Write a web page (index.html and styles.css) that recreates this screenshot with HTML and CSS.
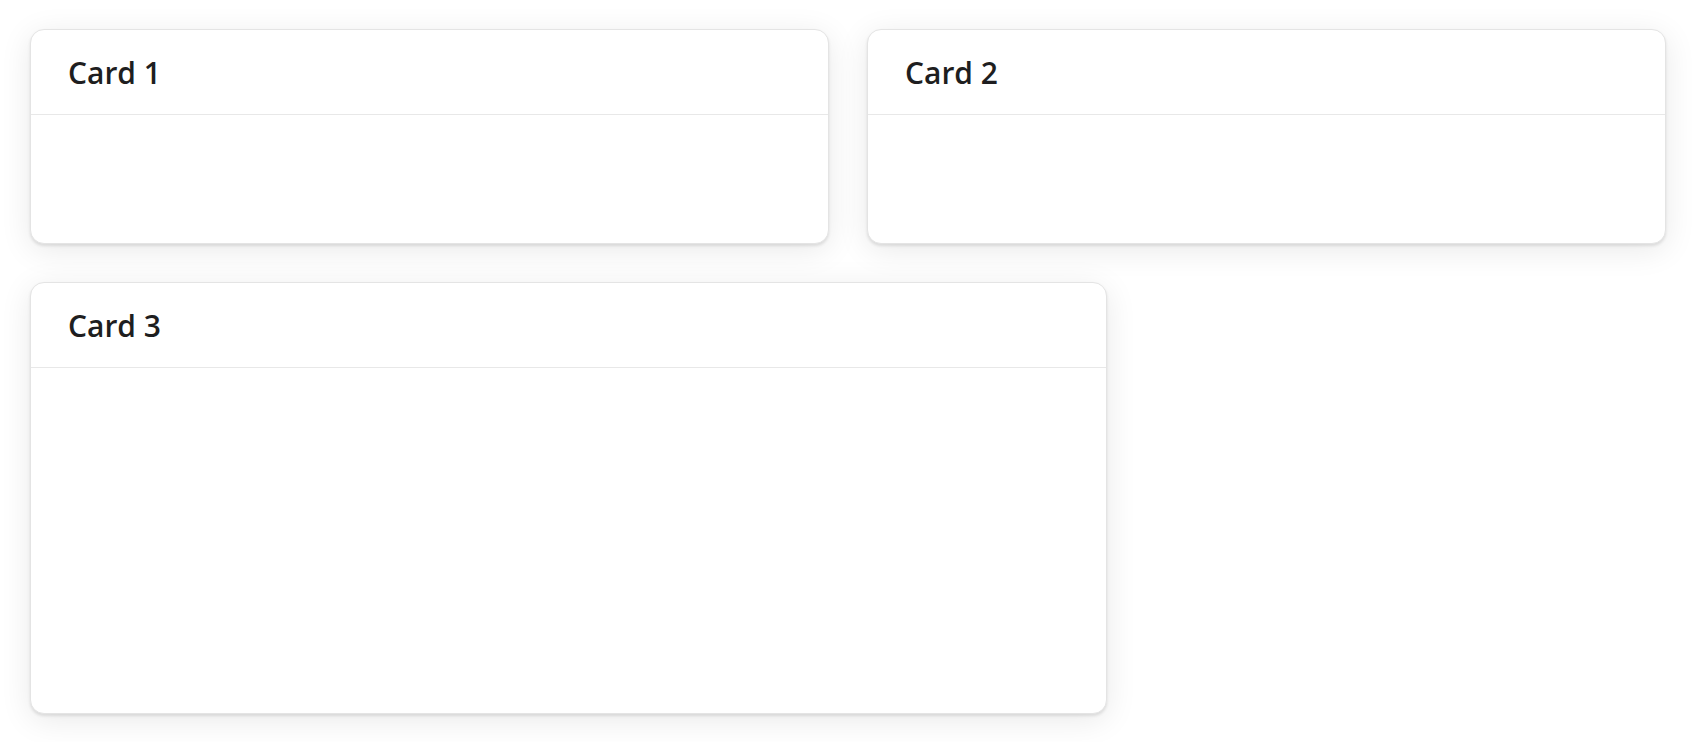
FILE: index.html
```html
<!DOCTYPE html>
<html lang="en">
<head>
    <meta charset="UTF-8">
    <title>Cards</title>
    <link rel="stylesheet" href="styles.css">
</head>
<body>
    <div class="board">
        <div class="card">
            <div class="card-header"><h2>Card 1</h2></div>
            <div class="card-body"></div>
        </div>
        <div class="card">
            <div class="card-header"><h2>Card 2</h2></div>
            <div class="card-body"></div>
        </div>
        <div class="card card-wide">
            <div class="card-header"><h2>Card 3</h2></div>
            <div class="card-body card-body-tall"></div>
        </div>
    </div>
</body>
</html>
```

FILE: styles.css
```css
/* Page */
body {
    margin: 0;
    padding: 29px 30px;
    background-color: #ffffff;
    font-family: "Open Sans", "Noto Sans", sans-serif;
    color: #1e1e20;
}

/* Two column grid of cards */
.board {
    display: grid;
    grid-template-columns: minmax(0, 1fr) minmax(0, 1fr);
    column-gap: 38px;
    row-gap: 38px;
    align-items: start;
}

.card {
    background-color: #ffffff;
    border: 1px solid #e4e4e4;
    border-radius: 14px;
    box-shadow: 0 2px 3px rgba(0, 0, 0, 0.1), 0 6px 32px rgba(0, 0, 0, 0.09);
}

.card-wide {
    grid-column: 1 / 3;
    justify-self: start;
    width: 1077px;
    box-sizing: border-box;
}

.card-header {
    display: flex;
    align-items: center;
    height: 84px;
    padding: 0 37px;
    border-bottom: 1px solid #e8e8e8;
}

.card-header h2 {
    margin: 0;
    font-size: 30px;
    font-weight: 600;
}

.card-body {
    height: 128px;
}

.card-body-tall {
    height: 345px;
}
```
